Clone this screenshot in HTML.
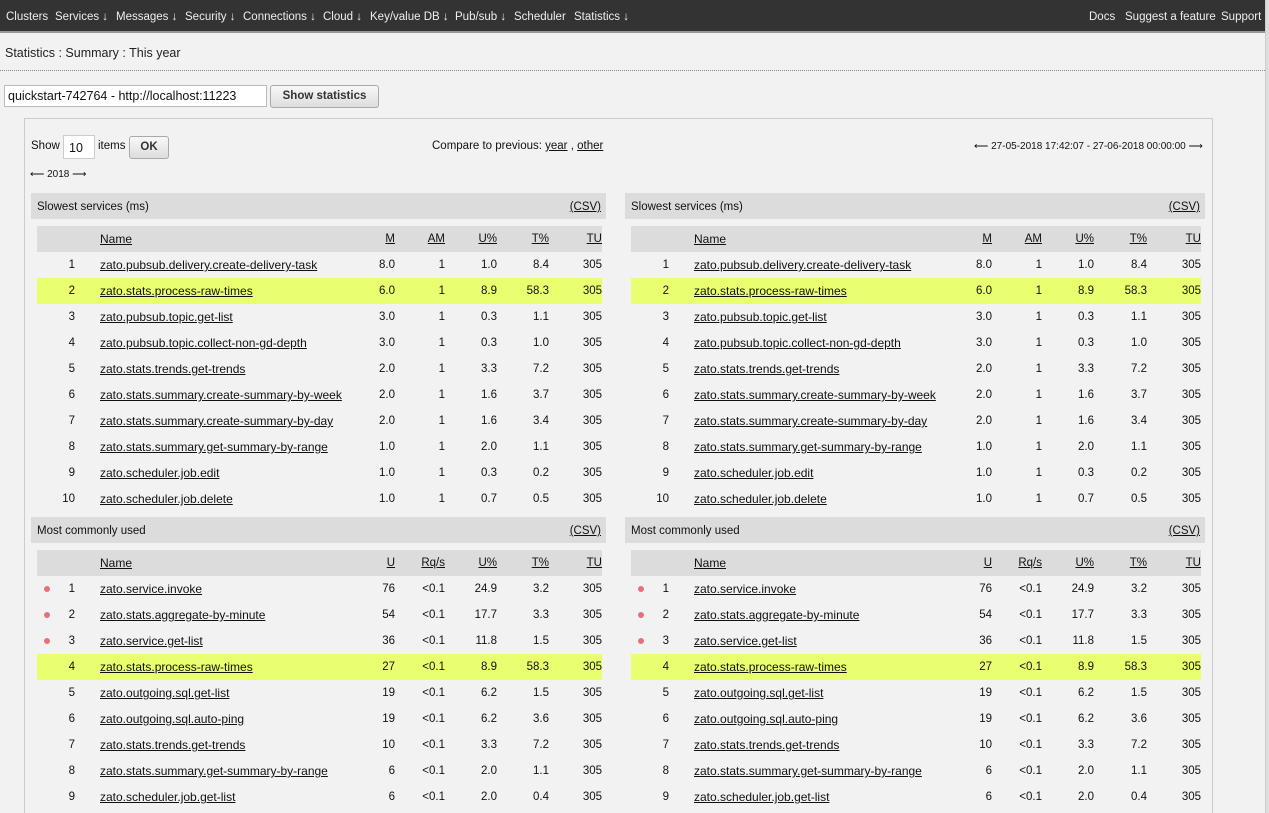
<!DOCTYPE html>
<html><head><meta charset="utf-8"><style>
*{box-sizing:border-box}
html,body{margin:0;width:1269px;height:813px;overflow:hidden}
body{background:#f2f2f2;font-family:"Liberation Sans",Arial,sans-serif;font-size:11px;color:#111;position:relative}
.nav{position:absolute;left:0;top:0;width:1265px;height:33px;background:#333;border-bottom:2px solid #999;color:#eee;font-size:11.5px}
.nav span{position:absolute;top:11px;white-space:nowrap}
.sb{position:absolute;right:0;top:0;width:4px;height:813px;background:#ddd;border-left:1px solid #ccc}
.crumb{position:absolute;left:5px;top:46px;font-size:12.5px;color:#222}
.dots{position:absolute;left:0;top:70px;width:1265px;border-top:1px dotted #888}
.sel{position:absolute;left:4px;top:85px;width:263px;height:22px;background:#fff;border:1px solid #bbb;font-size:12.5px;padding:3px 3px}
.btn{position:absolute;background:linear-gradient(#f8f8f8,#ddd);border:1px solid #aaa;border-radius:3px;font-weight:bold;font-size:11.5px;text-align:center;color:#333}
.box{position:absolute;left:24px;top:118px;width:1189px;height:700px;border:1px solid #ccc}
.abs{position:absolute;white-space:nowrap}
u{text-decoration:underline}
.sh{position:absolute;height:26px;background:#dcdcdc;font-size:11.5px}
.sh .t{position:absolute;left:6px;top:8px}.sh .c{position:absolute;right:5px;top:8px;text-decoration:underline}
table{position:absolute;border-collapse:collapse;table-layout:fixed;font-size:11.5px}
td{height:26px;padding:0 5px 0 0;text-align:right;white-space:nowrap}
td:last-child{padding-right:0}
td.n{text-align:left;padding-left:8px;font-size:12px}
td.i{padding-right:17px;position:relative}
tr.h td{background:#dcdcdc;text-decoration:underline}
tr.y td{background:#eaff6f}
td a{color:#111;text-decoration:underline}
.dot{position:absolute;left:7px;top:10px;width:6px;height:6px;border-radius:3px;background:#e8707a}
</style></head><body>
<div class="nav">
<span style="left:6px">Clusters</span><span style="left:55px">Services ↓</span><span style="left:116px">Messages ↓</span><span style="left:185px">Security ↓</span><span style="left:243px">Connections ↓</span><span style="left:323px">Cloud ↓</span><span style="left:370px">Key/value DB ↓</span><span style="left:455px">Pub/sub ↓</span><span style="left:514px">Scheduler</span><span style="left:574px">Statistics ↓</span>
<span style="left:1089px">Docs</span><span style="left:1125px">Suggest a feature</span><span style="left:1221px">Support</span>
</div>
<div class="sb"></div>
<div class="crumb">Statistics : Summary : This year</div>
<div class="dots"></div>
<div class="sel">quickstart-742764 - http://localhost:11223</div>
<div class="btn" style="left:270px;top:85px;width:109px;height:23px;line-height:21px">Show statistics</div>
<div class="box"></div>
<div class="abs" style="left:31px;top:140px;font-size:11.5px">Show</div>
<div class="abs" style="left:63px;top:135px;width:32px;height:24px;background:#fff;border:1px solid #ccc;font-size:12.5px;padding:5px 0 0 5px">10</div>
<div class="abs" style="left:98px;top:140px;font-size:11.5px">items</div>
<div class="btn" style="left:129px;top:136px;width:40px;height:23px;line-height:21px">OK</div>
<div class="abs" style="left:432px;top:140px;font-size:11.5px">Compare to previous: <u>year</u> , <u>other</u></div>
<div class="abs" style="left:974px;top:141px;font-size:10px">⟵ 27-05-2018 17:42:07 - 27-06-2018 00:00:00 ⟶</div>
<div class="abs" style="left:30px;top:169px;font-size:10px">⟵ 2018 ⟶</div>

<div class="sh" style="left:31px;top:193px;width:575px"><span class="t">Slowest services (ms)</span><span class="c">(CSV)</span></div>
<div class="sh" style="left:625px;top:193px;width:580px"><span class="t">Slowest services (ms)</span><span class="c">(CSV)</span></div>
<div class="sh" style="left:31px;top:517px;width:575px"><span class="t">Most commonly used</span><span class="c">(CSV)</span></div>
<div class="sh" style="left:625px;top:517px;width:580px"><span class="t">Most commonly used</span><span class="c">(CSV)</span></div>

<table style="left:37px;top:226px;width:565px"><colgroup><col style="width:55px"><col style="width:248px"><col style="width:60px"><col style="width:50px"><col style="width:52px"><col style="width:52px"><col style="width:48px"></colgroup>
<tr class="h"><td style="text-decoration:none"></td><td class="n">Name</td><td>M</td><td>AM</td><td>U%</td><td>T%</td><td>TU</td></tr>
<tr><td class="i">1</td><td class="n"><a>zato.pubsub.delivery.create-delivery-task</a></td><td>8.0</td><td>1</td><td>1.0</td><td>8.4</td><td>305</td></tr>
<tr class="y"><td class="i">2</td><td class="n"><a>zato.stats.process-raw-times</a></td><td>6.0</td><td>1</td><td>8.9</td><td>58.3</td><td>305</td></tr>
<tr><td class="i">3</td><td class="n"><a>zato.pubsub.topic.get-list</a></td><td>3.0</td><td>1</td><td>0.3</td><td>1.1</td><td>305</td></tr>
<tr><td class="i">4</td><td class="n"><a>zato.pubsub.topic.collect-non-gd-depth</a></td><td>3.0</td><td>1</td><td>0.3</td><td>1.0</td><td>305</td></tr>
<tr><td class="i">5</td><td class="n"><a>zato.stats.trends.get-trends</a></td><td>2.0</td><td>1</td><td>3.3</td><td>7.2</td><td>305</td></tr>
<tr><td class="i">6</td><td class="n"><a>zato.stats.summary.create-summary-by-week</a></td><td>2.0</td><td>1</td><td>1.6</td><td>3.7</td><td>305</td></tr>
<tr><td class="i">7</td><td class="n"><a>zato.stats.summary.create-summary-by-day</a></td><td>2.0</td><td>1</td><td>1.6</td><td>3.4</td><td>305</td></tr>
<tr><td class="i">8</td><td class="n"><a>zato.stats.summary.get-summary-by-range</a></td><td>1.0</td><td>1</td><td>2.0</td><td>1.1</td><td>305</td></tr>
<tr><td class="i">9</td><td class="n"><a>zato.scheduler.job.edit</a></td><td>1.0</td><td>1</td><td>0.3</td><td>0.2</td><td>305</td></tr>
<tr><td class="i">10</td><td class="n"><a>zato.scheduler.job.delete</a></td><td>1.0</td><td>1</td><td>0.7</td><td>0.5</td><td>305</td></tr>
</table>

<table style="left:631px;top:226px;width:570px"><colgroup><col style="width:55px"><col style="width:250px"><col style="width:61px"><col style="width:50px"><col style="width:52px"><col style="width:53px"><col style="width:49px"></colgroup>
<tr class="h"><td style="text-decoration:none"></td><td class="n">Name</td><td>M</td><td>AM</td><td>U%</td><td>T%</td><td>TU</td></tr>
<tr><td class="i">1</td><td class="n"><a>zato.pubsub.delivery.create-delivery-task</a></td><td>8.0</td><td>1</td><td>1.0</td><td>8.4</td><td>305</td></tr>
<tr class="y"><td class="i">2</td><td class="n"><a>zato.stats.process-raw-times</a></td><td>6.0</td><td>1</td><td>8.9</td><td>58.3</td><td>305</td></tr>
<tr><td class="i">3</td><td class="n"><a>zato.pubsub.topic.get-list</a></td><td>3.0</td><td>1</td><td>0.3</td><td>1.1</td><td>305</td></tr>
<tr><td class="i">4</td><td class="n"><a>zato.pubsub.topic.collect-non-gd-depth</a></td><td>3.0</td><td>1</td><td>0.3</td><td>1.0</td><td>305</td></tr>
<tr><td class="i">5</td><td class="n"><a>zato.stats.trends.get-trends</a></td><td>2.0</td><td>1</td><td>3.3</td><td>7.2</td><td>305</td></tr>
<tr><td class="i">6</td><td class="n"><a>zato.stats.summary.create-summary-by-week</a></td><td>2.0</td><td>1</td><td>1.6</td><td>3.7</td><td>305</td></tr>
<tr><td class="i">7</td><td class="n"><a>zato.stats.summary.create-summary-by-day</a></td><td>2.0</td><td>1</td><td>1.6</td><td>3.4</td><td>305</td></tr>
<tr><td class="i">8</td><td class="n"><a>zato.stats.summary.get-summary-by-range</a></td><td>1.0</td><td>1</td><td>2.0</td><td>1.1</td><td>305</td></tr>
<tr><td class="i">9</td><td class="n"><a>zato.scheduler.job.edit</a></td><td>1.0</td><td>1</td><td>0.3</td><td>0.2</td><td>305</td></tr>
<tr><td class="i">10</td><td class="n"><a>zato.scheduler.job.delete</a></td><td>1.0</td><td>1</td><td>0.7</td><td>0.5</td><td>305</td></tr>
</table>

<table style="left:37px;top:550px;width:565px"><colgroup><col style="width:55px"><col style="width:248px"><col style="width:60px"><col style="width:50px"><col style="width:52px"><col style="width:52px"><col style="width:48px"></colgroup>
<tr class="h"><td style="text-decoration:none"></td><td class="n">Name</td><td>U</td><td>Rq/s</td><td>U%</td><td>T%</td><td>TU</td></tr>
<tr><td class="i"><span class="dot"></span>1</td><td class="n"><a>zato.service.invoke</a></td><td>76</td><td>&lt;0.1</td><td>24.9</td><td>3.2</td><td>305</td></tr>
<tr><td class="i"><span class="dot"></span>2</td><td class="n"><a>zato.stats.aggregate-by-minute</a></td><td>54</td><td>&lt;0.1</td><td>17.7</td><td>3.3</td><td>305</td></tr>
<tr><td class="i"><span class="dot"></span>3</td><td class="n"><a>zato.service.get-list</a></td><td>36</td><td>&lt;0.1</td><td>11.8</td><td>1.5</td><td>305</td></tr>
<tr class="y"><td class="i">4</td><td class="n"><a>zato.stats.process-raw-times</a></td><td>27</td><td>&lt;0.1</td><td>8.9</td><td>58.3</td><td>305</td></tr>
<tr><td class="i">5</td><td class="n"><a>zato.outgoing.sql.get-list</a></td><td>19</td><td>&lt;0.1</td><td>6.2</td><td>1.5</td><td>305</td></tr>
<tr><td class="i">6</td><td class="n"><a>zato.outgoing.sql.auto-ping</a></td><td>19</td><td>&lt;0.1</td><td>6.2</td><td>3.6</td><td>305</td></tr>
<tr><td class="i">7</td><td class="n"><a>zato.stats.trends.get-trends</a></td><td>10</td><td>&lt;0.1</td><td>3.3</td><td>7.2</td><td>305</td></tr>
<tr><td class="i">8</td><td class="n"><a>zato.stats.summary.get-summary-by-range</a></td><td>6</td><td>&lt;0.1</td><td>2.0</td><td>1.1</td><td>305</td></tr>
<tr><td class="i">9</td><td class="n"><a>zato.scheduler.job.get-list</a></td><td>6</td><td>&lt;0.1</td><td>2.0</td><td>0.4</td><td>305</td></tr>
</table>

<table style="left:631px;top:550px;width:570px"><colgroup><col style="width:55px"><col style="width:250px"><col style="width:61px"><col style="width:50px"><col style="width:52px"><col style="width:53px"><col style="width:49px"></colgroup>
<tr class="h"><td style="text-decoration:none"></td><td class="n">Name</td><td>U</td><td>Rq/s</td><td>U%</td><td>T%</td><td>TU</td></tr>
<tr><td class="i"><span class="dot"></span>1</td><td class="n"><a>zato.service.invoke</a></td><td>76</td><td>&lt;0.1</td><td>24.9</td><td>3.2</td><td>305</td></tr>
<tr><td class="i"><span class="dot"></span>2</td><td class="n"><a>zato.stats.aggregate-by-minute</a></td><td>54</td><td>&lt;0.1</td><td>17.7</td><td>3.3</td><td>305</td></tr>
<tr><td class="i"><span class="dot"></span>3</td><td class="n"><a>zato.service.get-list</a></td><td>36</td><td>&lt;0.1</td><td>11.8</td><td>1.5</td><td>305</td></tr>
<tr class="y"><td class="i">4</td><td class="n"><a>zato.stats.process-raw-times</a></td><td>27</td><td>&lt;0.1</td><td>8.9</td><td>58.3</td><td>305</td></tr>
<tr><td class="i">5</td><td class="n"><a>zato.outgoing.sql.get-list</a></td><td>19</td><td>&lt;0.1</td><td>6.2</td><td>1.5</td><td>305</td></tr>
<tr><td class="i">6</td><td class="n"><a>zato.outgoing.sql.auto-ping</a></td><td>19</td><td>&lt;0.1</td><td>6.2</td><td>3.6</td><td>305</td></tr>
<tr><td class="i">7</td><td class="n"><a>zato.stats.trends.get-trends</a></td><td>10</td><td>&lt;0.1</td><td>3.3</td><td>7.2</td><td>305</td></tr>
<tr><td class="i">8</td><td class="n"><a>zato.stats.summary.get-summary-by-range</a></td><td>6</td><td>&lt;0.1</td><td>2.0</td><td>1.1</td><td>305</td></tr>
<tr><td class="i">9</td><td class="n"><a>zato.scheduler.job.get-list</a></td><td>6</td><td>&lt;0.1</td><td>2.0</td><td>0.4</td><td>305</td></tr>
</table>
</body></html>
